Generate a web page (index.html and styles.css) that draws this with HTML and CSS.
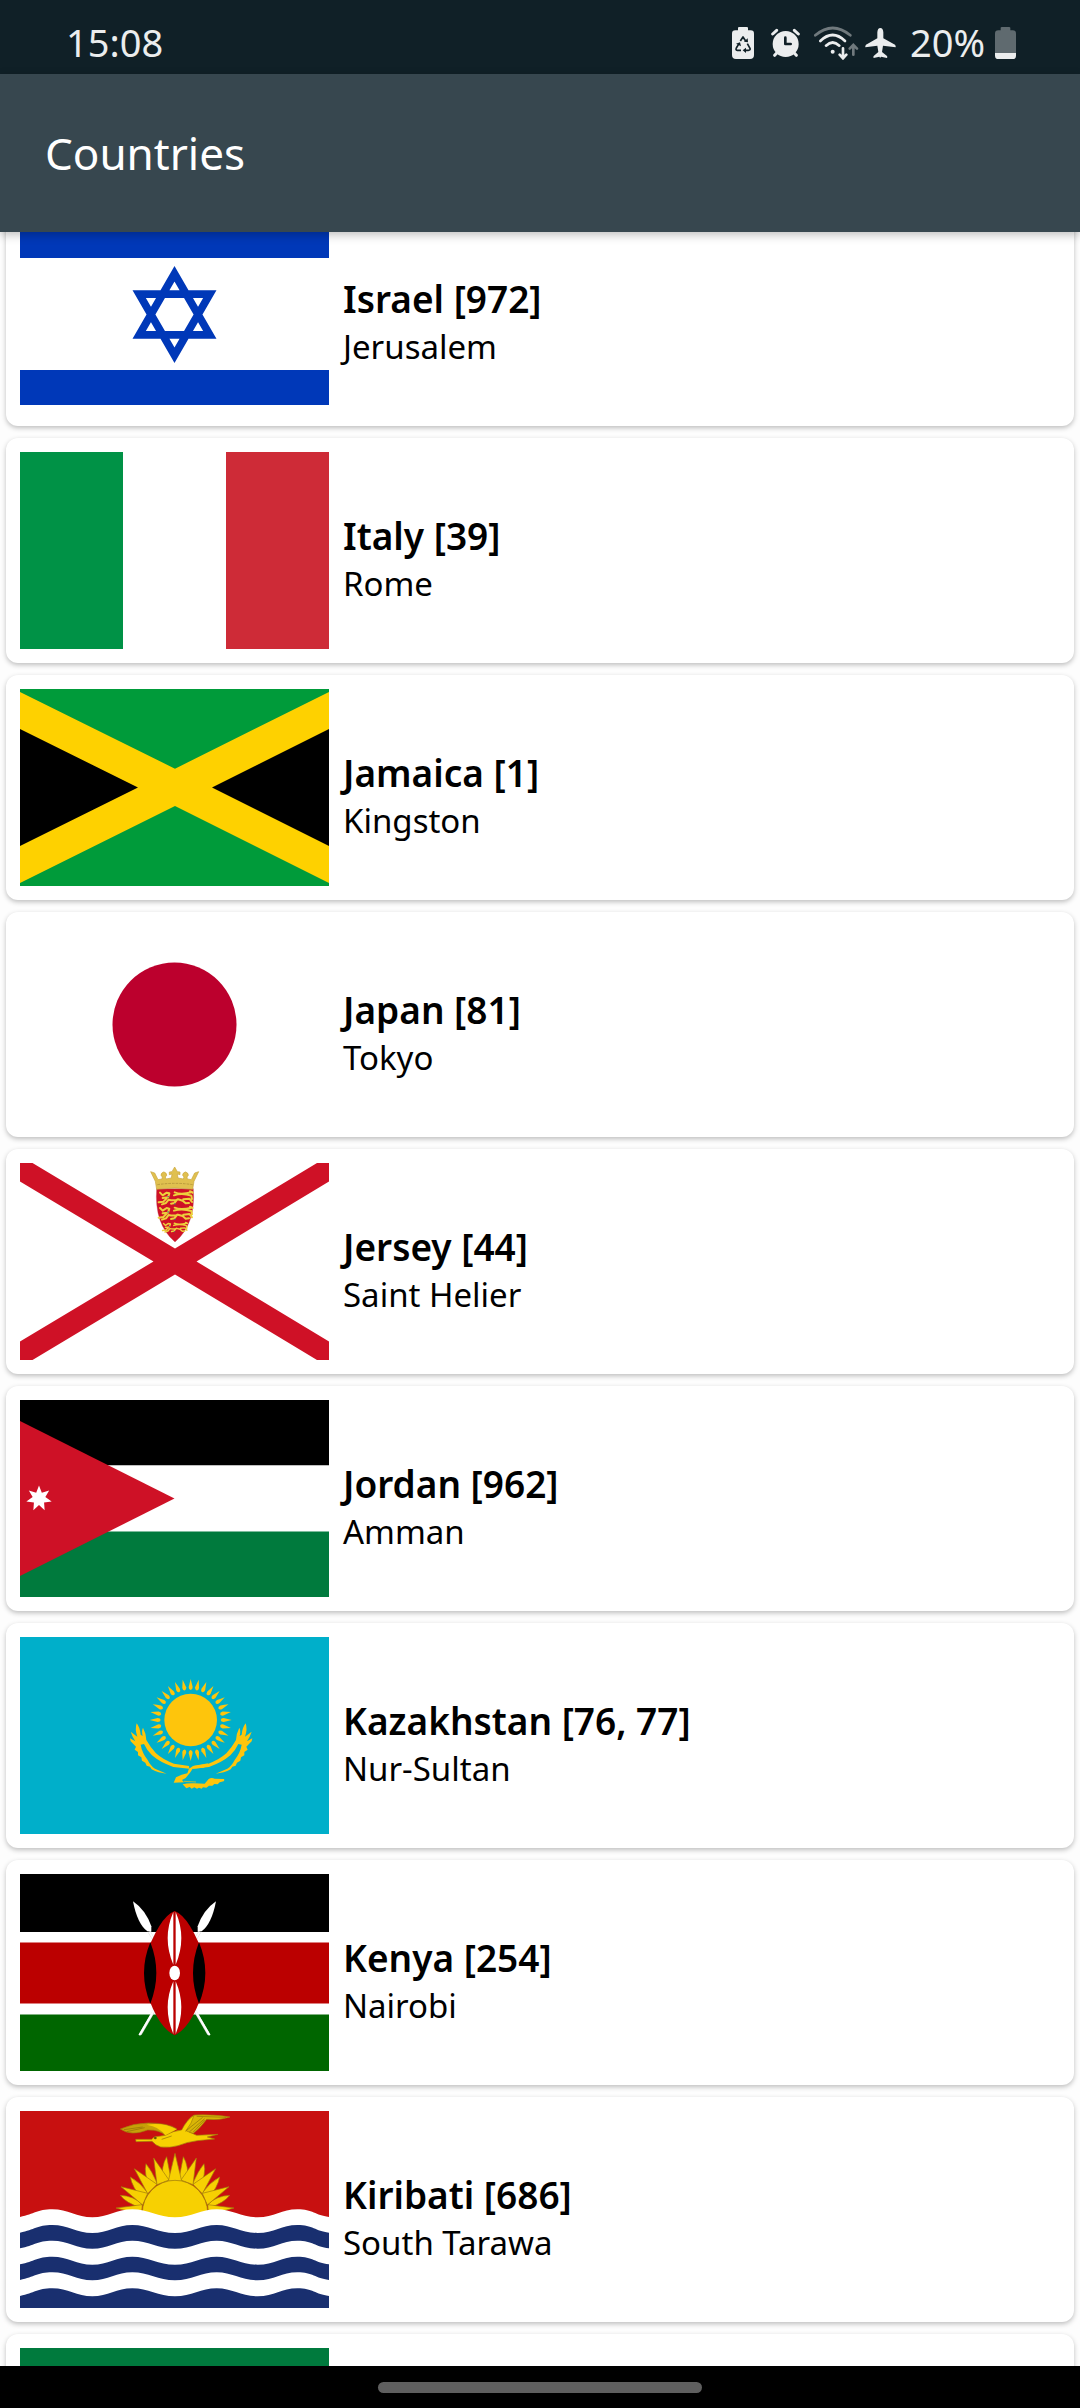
FILE: index.html
```html
<!DOCTYPE html>
<html lang="en">
<head>
<meta charset="utf-8">
<meta name="viewport" content="width=device-width, initial-scale=1">
<title>Countries</title>
<link rel="stylesheet" href="styles.css">
</head>
<body>
<div class="app">
  <div class="status">
    <time class="clock">15:08</time>
    <div class="indicators">
      <svg class="saver" width="22" height="32" viewBox="0 0 66 96" aria-hidden="true">
        <path fill="#ebedee" d="M18 2q0-2 4-2h22q4 0 4 2v8h8q10 0 10 10v64q0 12-12 12H12Q0 96 0 84V20q0-10 10-10h8z"/>
        <g fill="none" stroke="#102027" stroke-width="5" stroke-linejoin="round"><path d="M25 42l8-12 8 12M46 50l8 14q2 6-5 6H39M27 70H16q-6-1-3-7l8-13"/></g>
        <path fill="#102027" d="M36 44l12 2-1-12zM42 62v16l-10-8zM12 50l12-4 3 12z"/>
      </svg>
      <svg class="alarm" width="29" height="32" viewBox="0 0 87 96" aria-hidden="true">
        <circle cx="44" cy="51" r="39" fill="#ebedee"/>
        <path stroke="#ebedee" stroke-width="9" stroke-linecap="round" d="M5 21L17 10M82 21L70 10M18 77l-7 8M69 77l7 8"/>
        <path fill="none" stroke="#102027" stroke-width="8" stroke-linecap="round" stroke-linejoin="round" d="M43 32v19h16"/>
      </svg>
      <svg class="wifi" width="45" height="34" viewBox="0 0 135 102" aria-hidden="true">
        <g fill="none" stroke-width="8" stroke-linecap="round">
          <path stroke="#70797d" d="M4 28Q56-16 109 28"/>
          <path stroke="#ebedee" d="M19 45Q56 9 93 45M36 59q20-19 40 0"/>
          <path stroke="#ebedee" d="M87 67v30M77 86l10 11 10-11"/>
          <path stroke="#70797d" d="M118 86V59M107 68l11-11 11 11"/>
        </g>
        <circle cx="56" cy="77" r="6" fill="#ebedee"/>
      </svg>
      <svg class="plane" width="31" height="32" viewBox="0 0 93 96" aria-hidden="true">
        <path fill="#ebedee" d="M46 3q8 0 9 13v18l35 19q3 3 2 8l-38-5-3 19 15 12q2 3 0 6l-18-4-2 3h-1l-2-3-17 4q-2-3 0-6l14-12-3-19-36 5q-1-5 2-8l34-19V16q1-13 9-13z"/>
      </svg>
      <span class="level">20%</span>
      <svg class="battery" width="21" height="32" viewBox="0 0 63 96" aria-hidden="true">
        <path fill="#5f6a6f" d="M17 2q0-2 4-2h21q4 0 4 2v8h7q10 0 10 10v58H0V20q0-10 10-10h7z"/>
        <path fill="#ebedee" d="M0 78h63v8q0 10-10 10H10Q0 96 0 86z"/>
      </svg>
    </div>
  </div>

  <header class="toolbar"><h1 class="title">Countries</h1></header>

  <main class="viewport">
    <ul class="list">
      <li class="card">
        <svg class="flag" viewBox="0 0 309 197" role="img" aria-label="Flag of Israel">
          <path fill="#fff" d="M0 0h309v197H0z"/>
          <path fill="#0038b8" d="M0 7h309v36H0zM0 155h309v35H0z"/>
          <path fill="none" stroke="#0038b8" stroke-width="7.7" d="M154.500 58.700L189.800 119.800H119.200zM154.500 140.300L189.800 79.200H119.200z"/>
        </svg>
        <div class="info"><h2 class="name">Israel [972]</h2><p class="city">Jerusalem</p></div>
      </li>
      <li class="card">
        <svg class="flag" viewBox="0 0 309 197" role="img" aria-label="Flag of Italy">
          <path fill="#009246" d="M0 0h103v197H0z"/><path fill="#fff" d="M103 0h103v197H103z"/><path fill="#ce2b37" d="M206 0h103v197H206z"/>
        </svg>
        <div class="info"><h2 class="name">Italy [39]</h2><p class="city">Rome</p></div>
      </li>
      <li class="card">
        <svg class="flag" viewBox="0 0 309 197" role="img" aria-label="Flag of Jamaica">
          <path fill="#fed100" d="M0 0h309v197H0z"/>
          <path fill="#009b3a" d="M0 0h309v3L155 79.700 0 3zM0 197h309v-3L155 117 0 194z"/>
          <path d="M0 40l118 58.500L0 157zM309 40L192 98.500 309 157z"/>
        </svg>
        <div class="info"><h2 class="name">Jamaica [1]</h2><p class="city">Kingston</p></div>
      </li>
      <li class="card">
        <svg class="flag" viewBox="0 0 309 197" role="img" aria-label="Flag of Japan">
          <path fill="#fff" d="M0 0h309v197H0z"/><circle cx="154.500" cy="98.500" r="62" fill="#bc002d"/>
        </svg>
        <div class="info"><h2 class="name">Japan [81]</h2><p class="city">Tokyo</p></div>
      </li>
      <li class="card">
        <svg class="flag" viewBox="0 0 309 197" role="img" aria-label="Flag of Jersey">
          <path fill="#fff" d="M0 0h309v197H0z"/>
          <path fill="#cf1126" d="M0 0h12.500L155 85.500 297 0h12v18.500L176.500 98.500 309 178.500V197h-12L155 111.500 12.500 197H0v-18.500L133.500 98.500 0 18.500z"/>
          <g transform="translate(110 -13) scale(.33333)">
            <path fill="#cf1126" stroke="#b9414b" stroke-width="1" d="M80 116h110q8 106-55 160Q72 222 80 116z"/>
            <path fill="#e0c04f" stroke="#c9a53c" stroke-width="2" d="M80 118l-4-24-14-29 12 4 10 20 12-2 1-6a8 8 0 1 1 9 0l2 6 16-3 2-12-8 2v-8l8-1 8-14 8 14 8 1v8l-8-2 2 12 16 3 2-6a8 8 0 1 1 9 0l1 6 12 2 10-20 12-4-14 29-4 24q-54-8-108 0z"/>
            <path fill="none" stroke="#a98a35" stroke-width="2" stroke-dasharray="8 3" d="M82 104q53-8 106 0"/>
            <g id="lion" fill="none" stroke="#ecd03c" stroke-width="6" stroke-linecap="round" stroke-linejoin="round">
              <path d="M90 128l8 8 12-8 8 2-4 12-16 2M86 157l14-2 10-10M96 163l12-4 8-10q16 4 28-1l14 4 9 8 10-1M142 148l-9 11-10 2M160 148l18-2 8 10M134 127q18 8 50 0M132 136q24-8 52 1l2 10M180 124q6 1 8 4"/>
              <path stroke="#506c78" stroke-width="4" d="M114 140h1M134 162h1"/>
            </g>
            <use href="#lion" y="46"/>
            <use href="#lion" transform="translate(35 127) scale(.73)"/>
          </g>
        </svg>
        <div class="info"><h2 class="name">Jersey [44]</h2><p class="city">Saint Helier</p></div>
      </li>
      <li class="card">
        <svg class="flag" viewBox="0 0 309 197" role="img" aria-label="Flag of Jordan">
          <path d="M0 0h309v65.500H0z"/><path fill="#fff" d="M0 65.500h309v66H0z"/><path fill="#007a3d" d="M0 131.500h309V197H0z"/>
          <path fill="#ce1126" d="M0 21l154.500 77.500L0 176z"/>
          <polygon fill="#fff" transform="translate(19 98.500)" points="0,-13 2.820,-5.860 10.160,-8.100 6.340,-1.450 12.670,2.890 5.080,4.050 5.640,11.710 0,6.500 -5.640,11.710 -5.080,4.050 -12.670,2.890 -6.340,-1.450 -10.160,-8.100 -2.820,-5.860"/>
        </svg>
        <div class="info"><h2 class="name">Jordan [962]</h2><p class="city">Amman</p></div>
      </li>
      <li class="card">
        <svg class="flag" viewBox="0 0 309 197" role="img" aria-label="Flag of Kazakhstan">
          <path fill="#00afca" d="M0 0h309v197H0z"/>
          <g transform="translate(80 3) scale(.33333)" fill="#fec50c">
            <circle cx="272" cy="240" r="79"/>
            <g transform="translate(272 240)">
              <g id="rays">
                <path id="ray" d="M0-123q3 12 6 24 0 8-6 9-6-1-6-9 3-12 6-24z"/>
                <use href="#ray" transform="rotate(11.250)"/><use href="#ray" transform="rotate(22.500)"/><use href="#ray" transform="rotate(33.750)"/>
                <use href="#ray" transform="rotate(45)"/><use href="#ray" transform="rotate(56.250)"/><use href="#ray" transform="rotate(67.500)"/><use href="#ray" transform="rotate(78.750)"/>
              </g>
              <use href="#rays" transform="rotate(90)"/><use href="#rays" transform="rotate(180)"/><use href="#rays" transform="rotate(270)"/>
            </g>
            <path id="wing" d="M110 250Q120 262 122 284L128 288Q124 272 129 263 138 280 139 300 150 320 168 340 190 360 222 371L267 378 268 386 220 381Q180 367 156 346 140 330 132 312L122 314Q126 338 143 360 152 378 165 386L200 401Q175 399 155 388L150 380 140 377 136 368 126 362 124 352 114 346 114 336 104 329 108 320 92 304 90 295 106 304 98 290 92 275 112 290Q104 268 110 250Z"/>
            <use href="#wing" transform="translate(547 0) scale(-1 1)"/>
            <path d="M279 378L267 386 262 400 245 404 228 412 221 428 252 427 246 420 257 414 270 398 278 386 312 383 325 370Z"/>
            <path d="M248 433q14-4 34-3l32 1 12-14q8-5 18-1l28 1q2 4-1 7l-12 3-6 6-10-1-6 5-10 0-8 6-10-1-4 4-8-3-6 3-8-4-8 4-6-5-10 4-4-5z"/>
            <path fill="none" stroke="#fec50c" stroke-width="2" d="M252 424l36 2"/>
          </g>
        </svg>
        <div class="info"><h2 class="name">Kazakhstan [76, 77]</h2><p class="city">Nur-Sultan</p></div>
      </li>
      <li class="card">
        <svg class="flag" viewBox="0 0 309 197" role="img" aria-label="Flag of Kenya">
          <path d="M0 0h309v58H0z"/><path fill="#fff" d="M0 58h309v83H0z"/><path fill="#b00" d="M0 68.500h309v61H0z"/><path fill="#060" d="M0 140.500h309V197H0z"/>
          <g transform="translate(90 6) scale(.33333)">
            <g id="spear"><path stroke="#ddd" stroke-width="8" d="M296 463L118 156"/><path stroke="#fff" stroke-width="6" d="M299 466L118 156"/><path fill="#fff" d="M69 64q38 26 55 75v16l-12-1q-30-22-43-90z"/></g>
            <use href="#spear" transform="translate(387 0) scale(-1 1)"/>
            <path fill="#b00" d="M194 93Q240 110 286 240q4 40 0 70Q250 440 194 466 138 440 102 310q-4-40 0-70Q148 110 194 93z"/>
            <path d="M121 187q36 92 0 184-38-92 0-184zM267 187q38 92 0 184-36-92 0-184z"/>
            <path fill="#fff" d="M190 96v158q-34-80 0-158zM197 96v158q34-80 0-158zM190 304v158q-34-80 0-158zM197 304v158q34-80 0-158z"/>
            <ellipse cx="194" cy="279" rx="16" ry="22" fill="#fff"/>
          </g>
        </svg>
        <div class="info"><h2 class="name">Kenya [254]</h2><p class="city">Nairobi</p></div>
      </li>
      <li class="card">
        <svg class="flag" viewBox="0 0 309 197" role="img" aria-label="Flag of Kiribati">
          <path fill="#c81010" d="M0 0h309v197H0z"/>
          <g transform="translate(-20 -31) scale(.33333)">
            <g fill="#f7d002" stroke="#a07a0c" stroke-width="2">
              <g id="half">
                <path d="M486 306q-2-50 14-76l14 72zM452 326q-22-46-14-75 18 22 34 60zM428 358q-32-36-37-67 30 16 54 50zM424 384q-48-16-63-38 40 2 64 26z"/>
                <path d="M471 314l-10-80 46 66zM443 341l-40-75 68 47zM428 375l-65-55 80 20zM424 404l-76-20 79-10z"/>
              </g>
              <use href="#half" transform="translate(1050 0) scale(-1 1)"/>
              <path d="M505 303l20-83 20 83z"/>
              <circle cx="525" cy="399" r="98"/>
              <path fill="#c7a008" d="M361 147q40-18 84-18 60 0 86 18l-34 20q-18-18-54-17-50 20-82-3z"/>
              <path fill="#d9b506" d="M544 155q24-46 40-50 60-2 106 6-34 12-70 7-22 30-40 42z"/>
              <path d="M407 178L455 178Q462 168 476 169L496 166Q520 152 545 150 560 120 582 106 576 130 558 152L590 166 654 163 622 171 644 177 592 182Q560 186 534 197 510 204 482 201 466 196 456 184L408 185Z"/>
            </g>
            <path fill="#f7d002" d="M440 134q50-8 90 14l-34 18q-18-26-56-32z"/>
            <path fill="none" stroke="#8f7109" stroke-width="2" d="M372 149l56-8M380 155l54-12M556 154l52-42M568 156l46-40M580 156l34-36M590 109l88 3M485 178l30-10"/>
            <circle cx="466" cy="174" r="4" fill="#665708"/>
            <g fill="#fff"><path id="sea" d="M60 411C105 402 110 388 157 388S230 412 277 412 350 388 397 388 475 412 525 412 603 388 650 388 723 412 773 412 845 388 892 388 945 406 987 411V700H60z"/></g>
            <g fill="#192f6f"><use href="#sea" y="47"/></g>
            <g fill="#fff"><use href="#sea" y="94"/></g>
            <g fill="#192f6f"><use href="#sea" y="142"/></g>
            <g fill="#fff"><use href="#sea" y="189"/></g>
            <g fill="#192f6f"><use href="#sea" y="237"/></g>
          </g>
        </svg>
        <div class="info"><h2 class="name">Kiribati [686]</h2><p class="city">South Tarawa</p></div>
      </li>
      <li class="card">
        <svg class="flag" viewBox="0 0 309 197" aria-hidden="true"><path fill="#007a3d" d="M0 0h309v50H0z"/></svg>
      </li>
    </ul>
  </main>

  <div class="gesture"><span class="pill"></span></div>
</div>
</body>
</html>
```
FILE: styles.css
```css
* { box-sizing: border-box; }

body {
  margin: 0;
  background: #fdfdfd;
  color: #000;
  font-family: "Noto Sans", "Open Sans", sans-serif;
}

h1, h2, p, ul { margin: 0; padding: 0; font-weight: 400; }

.app {
  display: flex;
  flex-direction: column;
  height: 100vh;
}

.status {
  flex: none;
  display: flex;
  align-items: center;
  justify-content: space-between;
  height: 74px;
  padding: 12px 64px 0 66px;
  background: #102027;
  color: #ebedee;
  font-size: 38px;
  line-height: 48px;
}

.clock, .level { padding-bottom: 2px; }

.indicators { display: flex; align-items: center; }
.indicators svg { flex: none; display: block; }
.alarm { margin-left: 17px; }
.wifi { margin-left: 14px; }
.plane { margin-left: 6px; }
.level { margin: 0 10px 0 14px; }

.toolbar {
  flex: none;
  position: relative;
  z-index: 1;
  display: flex;
  align-items: center;
  height: 158px;
  padding: 0 45px;
  background: #37474f;
  color: #fff;
  box-shadow: 0 3px 9px rgba(0, 0, 0, .25);
}

.title { font-size: 44px; line-height: 60px; }

.viewport {
  flex: 1;
  min-height: 0;
  overflow: hidden;
}

/* The list is scrolled part way through its first card. */
.list {
  display: flex;
  flex-direction: column;
  gap: 12px;
  margin-top: -31px;
  padding: 0 6px;
  list-style: none;
}

.card {
  display: flex;
  gap: 14px;
  padding: 14px;
  border-radius: 12px;
  background: #fff;
  box-shadow: 0 2px 5px rgba(0, 0, 0, .25);
}

.flag {
  flex: none;
  display: block;
  width: 309px;
  height: 197px;
}

.info { padding-top: 60px; }
.name { font-size: 37px; line-height: 48px; font-weight: 600; }
.city { font-size: 33px; line-height: 48px; }

.gesture {
  flex: none;
  display: flex;
  align-items: center;
  justify-content: center;
  height: 42px;
  background: #000;
}

.pill {
  width: 30%;
  height: 11px;
  border-radius: 6px;
  background: #5f5f5f;
}
```
